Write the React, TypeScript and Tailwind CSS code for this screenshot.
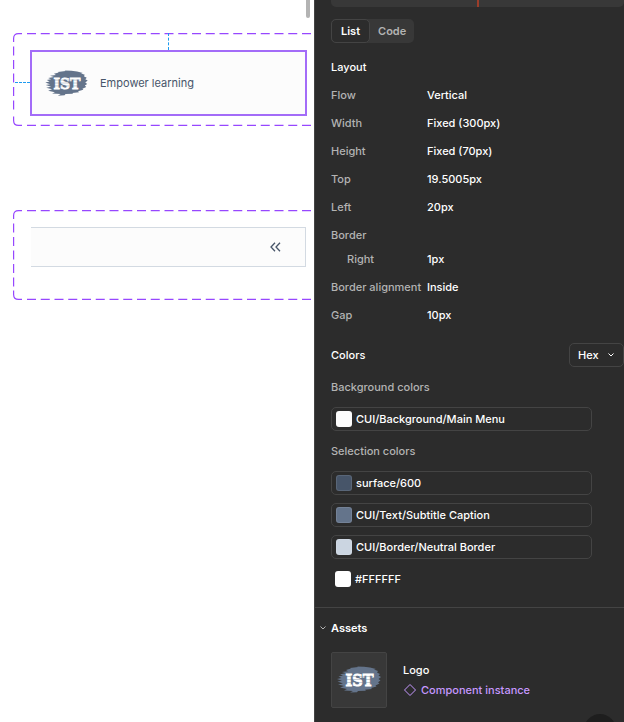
import { useState } from "react";

const layoutRows = [
  { label: "Flow", value: "Vertical" },
  { label: "Width", value: "Fixed (300px)" },
  { label: "Height", value: "Fixed (70px)" },
  { label: "Top", value: "19.5005px" },
  { label: "Left", value: "20px" },
  { label: "Border", value: "" },
  { label: "Right", value: "1px", nested: true },
  { label: "Border alignment", value: "Inside" },
  { label: "Gap", value: "10px" },
];

const selectionColors = [
  { name: "surface/600", swatch: "bg-[#475569]" },
  { name: "CUI/Text/Subtitle Caption", swatch: "bg-[#64748b]" },
  { name: "CUI/Border/Neutral Border", swatch: "bg-[#cbd5e1]" },
];

function Logo({ className }: { className: string }) {
  return (
    <svg viewBox="0 0 44 28" className={className} role="img" aria-label="IST logo">
      <path
        fill="#64748b"
        d="M9 4 L14 2.5 L13 2 L21 1 L20 .4 L27 .8 L33 1.6 L39 3 L37 3.6 L41 5 L40 6.4 L43 8 L41.5 9.5 L44 11 L41.5 13 L43.5 14.5 L41 16.2 L42.5 17.5 L38.5 19.5 L39.5 20.5 L34 22 L35 23 L28 23.8 L29 24.7 L21 25 L20 26.2 L13 26.6 L16 25 L7 24.4 L10 23 L3 21.4 L7 20 L1 18.4 L6 17.4 L.5 15.6 L5 14.8 L0 13 L4.5 12 L1.5 10.4 L6 9.6 L3 8.2 L9 7.2 L5 6 L11 5.2 Z"
      />
      <text
        x="22.5"
        y="20"
        textAnchor="middle"
        fill="#fff"
        stroke="#fff"
        strokeWidth=".8"
        className="font-['DejaVu_Serif_Condensed','DejaVu_Serif',serif] text-[16px] font-bold"
      >
        IST
      </text>
      <path d="M8 10.5H36M8 13.5H36M8 16.5H36" stroke="#64748b" strokeWidth=".6" opacity=".6" />
    </svg>
  );
}

function DashedOutline({ bottom }: { bottom: number }) {
  return (
    <svg
      aria-hidden="true"
      className="pointer-events-none absolute inset-0 h-full w-full"
      fill="none"
      stroke="#9747ff"
      strokeWidth="1.2"
    >
      <path d={`M.6 9V5.5Q.6 .6 5.5 .6H9M.6 ${bottom - 9}V${bottom - 5}Q.6 ${bottom} 5.5 ${bottom}H9`} />
      <path d={`M14 .6H2000M14 ${bottom}H2000`} strokeDasharray="9 4.75" />
      <path d={`M.6 13.5V${bottom - 13}`} strokeDasharray="9 4.5" />
    </svg>
  );
}

function ColorChip({ name, swatch }: { name: string; swatch: string }) {
  return (
    <button
      type="button"
      className="flex h-6 w-full items-center gap-1 rounded-[5px] border border-[#444] pl-1 text-left"
    >
      <span className={`size-4 rounded-[3px] border border-white/10 ${swatch}`} />
      {name}
    </button>
  );
}

export default function App() {
  const [tab, setTab] = useState("List");
  return (
    <div className="flex min-h-screen bg-white font-['Inter',sans-serif] text-[11px] leading-4 font-medium">
      <main className="relative w-[314px] shrink-0 pt-[33px] pr-[3px] pl-[13px]">
        <div className="absolute top-0 right-1 h-[18px] w-1 rounded-b-full bg-[#b3b3b3]" />

        <section className="relative h-[93px] pt-[17px] pr-1 pl-[17px]">
          <DashedOutline bottom={92.4} />
          <div className="absolute top-0 left-[155px] h-[17px] border-l border-dashed border-[#1e9bf0]" />
          <div className="absolute top-[49px] left-0.5 w-[15px] border-t border-dashed border-[#1e9bf0]" />
          <div className="flex h-[66px] items-center gap-3 border-2 border-[#a36cf8] bg-[#fcfcfc] pl-[13px] font-normal text-[#475569]">
            <Logo className="h-[27px] w-[43px]" />
            <span>Empower learning</span>
          </div>
        </section>

        <section className="relative mt-[84px] h-[90px] pt-[17px] pr-[5px] pl-[18px]">
          <DashedOutline bottom={89.4} />
          <div className="flex h-10 items-center justify-end border-y border-r border-[#d3dae2] bg-[#fcfcfc] pr-6">
            <button type="button" aria-label="Collapse menu">
              <svg viewBox="0 0 11 10" className="h-[10px] w-[11px]" fill="none" stroke="#475569" strokeWidth="1.3">
                <path d="M5 .8 L1 5 L5 9.2 M10 .8 L6 5 L10 9.2" />
              </svg>
            </button>
          </div>
        </section>
      </main>

      <aside className="relative min-w-0 flex-1 overflow-hidden border-l border-[#444] bg-[#2c2c2c] text-white">
        <div className="ml-4 flex h-[7px] justify-center rounded-b-[5px] bg-[#383838]">
          <span className="w-0.5 bg-[#9c3d2a]" />
        </div>

        <div className="px-4 pt-3">
          <div role="tablist" className="inline-flex h-6 rounded-[5px] bg-[#383838]">
            {["List", "Code"].map((name) => (
              <button
                key={name}
                type="button"
                role="tab"
                aria-selected={tab === name}
                onClick={() => setTab(name)}
                className={
                  tab === name
                    ? "rounded-[5px] border border-[#444] bg-[#2c2c2c] px-[9px] font-semibold"
                    : "px-2 font-semibold text-[#b3b3b3]"
                }
              >
                {name}
              </button>
            ))}
          </div>

          <h2 className="mt-4 font-medium">Layout</h2>
          <dl className="mt-1.5">
            {layoutRows.map((row) => (
              <div key={row.label} className={row.nested ? "flex h-6 items-center pb-1" : "flex h-7 items-center"}>
                <dt className={row.nested ? "w-24 shrink-0 pl-4 text-[#b3b3b3]" : "w-24 shrink-0 whitespace-nowrap text-[#b3b3b3]"}>
                  {row.label}
                </dt>
                <dd>{row.value}</dd>
              </div>
            ))}
          </dl>
        </div>

        <div className="mt-3.5 flex items-center justify-between pl-4">
          <h2 className="font-medium">Colors</h2>
          <div className="relative">
            <select
              aria-label="Color format"
              className="block h-6 w-[55px] appearance-none rounded-[5px] border border-[#444] bg-[#2c2c2c] pl-2 font-medium"
            >
              <option>Hex</option>
              <option>RGB</option>
            </select>
            <svg aria-hidden="true" viewBox="0 0 6 4" className="pointer-events-none absolute top-2.5 right-2.5 h-1 w-1.5" fill="none" stroke="#fff">
              <path d="M.5 .5 L3 3 L5.5 .5" />
            </svg>
          </div>
        </div>

        <div className="pr-8 pb-4 pl-4">
          <h3 className="mt-3 text-[#b3b3b3]">Background colors</h3>
          <div className="mt-3">
            <ColorChip name="CUI/Background/Main Menu" swatch="bg-[#fcfcfc]" />
          </div>
          <h3 className="mt-3 text-[#b3b3b3]">Selection colors</h3>
          <div className="mt-3 flex flex-col gap-2">
            {selectionColors.map((color) => (
              <ColorChip key={color.name} name={color.name} swatch={color.swatch} />
            ))}
            <div className="flex h-6 items-center gap-1 pl-1">
              <span className="size-4 rounded-[3px] bg-white" />
              #FFFFFF
            </div>
          </div>
        </div>

        <section className="border-t border-[#444] pt-3">
          <h2 className="flex items-center font-semibold">
            <svg aria-hidden="true" viewBox="0 0 6 4" className="mx-[5px] h-1 w-1.5" fill="none" stroke="#b3b3b3">
              <path d="M.5 .5 L3 3 L5.5 .5" />
            </svg>
            Assets
          </h2>
          <div className="mt-4 flex items-center gap-4 pl-4">
            <div className="flex size-14 items-center justify-center rounded-xs border border-[#444] bg-[#383838]">
              <Logo className="h-7 w-11" />
            </div>
            <div className="flex flex-col gap-1">
              <span>Logo</span>
              <span className="flex items-center gap-1 text-[#c698ff]">
                <svg aria-hidden="true" viewBox="0 0 14 14" className="size-3.5" fill="none" stroke="currentColor">
                  <path d="M7 1.5 L12.5 7 L7 12.5 L1.5 7 Z" />
                </svg>
                Component instance
              </span>
            </div>
          </div>
        </section>
        <button type="button" aria-label="Help" className="absolute right-2 -bottom-6 size-8 rounded-full bg-[#1e1e1e]" />
      </aside>
    </div>
  );
}
